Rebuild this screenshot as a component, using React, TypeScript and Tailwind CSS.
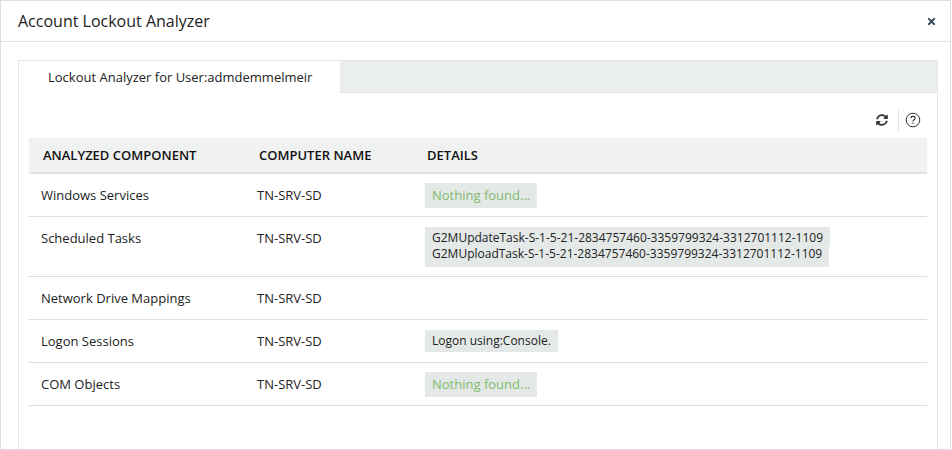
import React from "react";
import { FaSyncAlt, FaTimes } from "react-icons/fa";

type Row = {
  name: string;
  chip?: "none" | string[];
};

const rows: Row[] = [
  { name: "Windows Services", chip: "none" },
  {
    name: "Scheduled Tasks",
    chip: [
      "G2MUpdateTask-S-1-5-21-2834757460-3359799324-3312701112-1109",
      "G2MUploadTask-S-1-5-21-2834757460-3359799324-3312701112-1109",
    ],
  },
  { name: "Network Drive Mappings" },
  { name: "Logon Sessions", chip: ["Logon using:Console."] },
  { name: "COM Objects", chip: "none" },
];

const HelpIcon = () => (
  <svg width="16" height="16" viewBox="0 0 16 16" fill="none" className="text-[#333]">
    <circle cx="8" cy="8" r="6.8" stroke="currentColor" strokeWidth="1" />
    <path d="M5.9 6.3c0-1.2 1-1.9 2.1-1.9s2.1.7 2.1 1.8c0 1.6-2.1 1.6-2.1 3.2" stroke="currentColor" strokeWidth="1.1" />
    <rect x="7.4" y="10.6" width="1.2" height="1.3" fill="currentColor" />
  </svg>
);

const Chip = ({ chip }: { chip: Row["chip"] }) => {
  if (!chip) return null;
  if (chip === "none") {
    return <div className="w-fit bg-[#e4e9e8] px-[7px] h-[25px] leading-[25px] text-[#7fbb6c]">Nothing found...</div>;
  }
  if (chip.length === 1) {
    return <div className="w-fit mt-[1px] bg-[#e4e9e8] px-[7px] py-[3px] leading-[16px] text-[12px] text-[#222]">{chip[0]}</div>;
  }
  return (
    <div className="mt-[1px] mb-[1px] text-[12px] text-[#222]">
      {chip.map((line, i) => (
        <div
          key={line}
          className={i === 0 ? "w-fit bg-[#e4e9e8] px-[7px] pt-[3px] leading-[16px]" : "w-fit bg-[#e4e9e8] px-[7px] pb-[5px] leading-[16px]"}
        >
          {line}
        </div>
      ))}
    </div>
  );
};

export default function App() {
  return (
    <div className="w-[951px] h-[450px] overflow-hidden bg-white border border-[#dddddd] text-[13px] text-[#222] font-['Open_Sans',sans-serif]">
      <div className="flex items-center justify-between h-[41px] pl-[17px] pr-[13px] border-b border-[#e2e2e2]">
        <h1 className="text-[16px] text-[#222]">Account Lockout Analyzer</h1>
        <FaTimes size={11} className="text-[#3a4a5a]" />
      </div>
      <div className="ml-[17px] mr-[12px] mt-[18px] h-[400px] border border-[#e2e6e6] border-b-0">
        <div className="flex h-[32px] bg-[#ebeeee] border-b border-[#e2e6e6]">
          <div className="w-[321px] h-[33px] bg-white pl-[29px] leading-[33px] text-[#222]">
            Lockout Analyzer for User:admdemmelmeir
          </div>
        </div>
        <div className="flex justify-end items-center h-[45px] pt-[9px] pr-[16px] gap-[6px]">
          <FaSyncAlt size={12} className="text-[#333]" />
          <div className="h-[21px] w-px bg-[#e2e2e2] ml-[4px]" />
          <HelpIcon />
        </div>
        <div className="ml-[10px] mr-[10px]">
          <div className="flex h-[36px] items-center pt-[2px] bg-[#f0f2f2] border-b-2 border-[#e0e3e3] font-semibold text-[13px] text-[#111]">
            <div className="w-[216px] pl-[14px]">ANALYZED COMPONENT</div>
            <div className="w-[168px] pl-[14px]">COMPUTER NAME</div>
            <div className="pl-[14px]">DETAILS</div>
          </div>
          {rows.map((row) => (
            <div key={row.name} className="flex items-start border-b border-[#dddddd] pt-[9px] pb-[8px] min-h-[43px]">
              <div className="w-[216px] pl-[12px] leading-[24px]">{row.name}</div>
              <div className="w-[168px] pl-[12px] leading-[24px]">TN-SRV-SD</div>
              <div className="pl-[12px]">
                <Chip chip={row.chip} />
              </div>
            </div>
          ))}
        </div>
      </div>
    </div>
  );
}
